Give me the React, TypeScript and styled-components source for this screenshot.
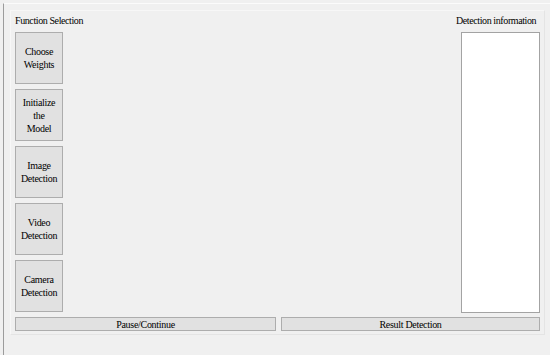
import React from 'react'
import styled, { createGlobalStyle } from 'styled-components'

const serif = `"Liberation Serif", "Tinos", "Times New Roman", "DejaVu Serif", serif`

const GlobalStyle = createGlobalStyle`
  html, body {
    margin: 0;
    padding: 0;
    background: #f0f0f0;
  }
  * {
    box-sizing: border-box;
  }
`

const Screen = styled.div`
  width: 550px;
  height: 355px;
  padding: 3px 0 0 3px;
  background: #f0f0f0;
  font-family: ${serif};
  color: #000;
  overflow: hidden;
`

const Frame = styled.div`
  height: 100%;
  border-left: 1px solid #9c9c9c;
  border-top: 1px solid #fbfbfb;
  padding: 6px 5px 0 6px;
`

const Panel = styled.div`
  display: flex;
  flex-direction: column;
  gap: 4px;
  padding: 4px;
  border: 1px solid #f7f7f7;
  border-right-color: #e4e4e4;
  border-bottom-color: #e4e4e4;
  height: 325px;
`

const Main = styled.div`
  display: flex;
  justify-content: space-between;
`

const Column = styled.div<{ width: number }>`
  display: flex;
  flex-direction: column;
  width: ${({ width }) => width}px;
`

const Label = styled.div`
  font-family: ${serif};
  font-size: 10px;
  letter-spacing: -0.4px;
  line-height: 12px;
  height: 12px;
  margin-bottom: 5px;
  white-space: nowrap;
  color: #000;
`

const ButtonStack = styled.div`
  display: flex;
  flex-direction: column;
  gap: 5px;
  width: 48px;
`

const SideButton = styled.button`
  all: unset;
  box-sizing: border-box;
  height: 52px;
  display: flex;
  align-items: center;
  justify-content: center;
  text-align: center;
  background: #e1e1e1;
  border: 1px solid #adadad;
  font-family: ${serif};
  font-size: 10px;
  letter-spacing: -0.3px;
  line-height: 13px;
  color: #000;
  padding: 0 2px;
`

const InfoBox = styled.div`
  height: 281px;
  background: #ffffff;
  border: 1px solid #a3a3a3;
  margin-left: 5px;
`

const Footer = styled.div`
  display: grid;
  grid-template-columns: 261px 1fr;
  gap: 5px;
`

const WideButton = styled.button`
  all: unset;
  box-sizing: border-box;
  height: 14px;
  display: flex;
  align-items: center;
  justify-content: center;
  background: #e1e1e1;
  border: 1px solid #adadad;
  font-family: ${serif};
  font-size: 10px;
  letter-spacing: -0.3px;
  color: #000;
`

const actions = [
  ['Choose', 'Weights'],
  ['Initialize', 'the', 'Model'],
  ['Image', 'Detection'],
  ['Video', 'Detection'],
  ['Camera', 'Detection'],
]

export default function App() {
  return (
    <>
      <GlobalStyle />
      <Screen>
        <Frame>
          <Panel>
            <Main>
              <Column width={80}>
                <Label>Function Selection</Label>
                <ButtonStack>
                  {actions.map((lines) => (
                    <SideButton key={lines.join(' ')}>
                      <span>
                        {lines.map((l, i) => (
                          <React.Fragment key={l}>
                            {i > 0 && <br />}
                            {l}
                          </React.Fragment>
                        ))}
                      </span>
                    </SideButton>
                  ))}
                </ButtonStack>
              </Column>
              <Column width={84}>
                <Label>Detection information</Label>
                <InfoBox />
              </Column>
            </Main>
            <Footer>
              <WideButton>Pause/Continue</WideButton>
              <WideButton>Result Detection</WideButton>
            </Footer>
          </Panel>
        </Frame>
      </Screen>
    </>
  )
}
